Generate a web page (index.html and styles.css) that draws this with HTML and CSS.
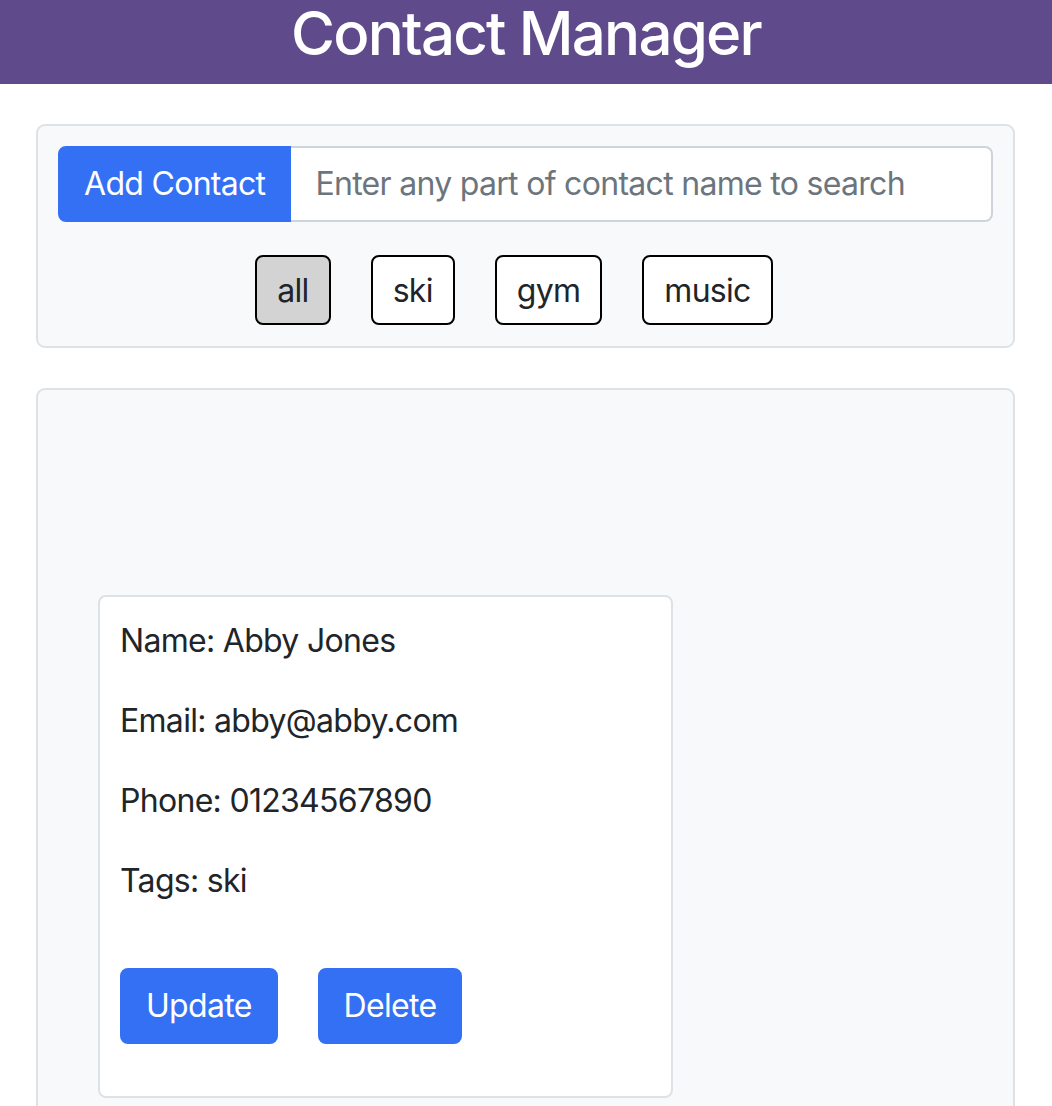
FILE: index.html
```html
<!DOCTYPE html>
<html lang="en">
<head>
<meta charset="utf-8">
<title>Contact Manager</title>
<link rel="stylesheet" href="styles.css">
</head>
<body>
<header class="app-header">
  <h1 class="app-title">Contact Manager</h1>
</header>
<main class="app-main">
  <section class="panel search-panel">
    <div class="input-group">
      <button class="btn btn-primary add-btn" type="button">Add Contact</button>
      <input class="search-input" type="text" placeholder="Enter any part of contact name to search">
    </div>
    <div class="filters">
      <button class="filter filter-active" type="button">all</button>
      <button class="filter" type="button">ski</button>
      <button class="filter" type="button">gym</button>
      <button class="filter" type="button">music</button>
    </div>
  </section>
  <section class="panel list-panel">
    <div class="card">
      <p class="field">Name: Abby Jones</p>
      <p class="field">Email: abby@abby.com</p>
      <p class="field">Phone: 01234567890</p>
      <p class="field">Tags: ski</p>
      <div class="card-actions">
        <button class="btn btn-primary" type="button">Update</button>
        <button class="btn btn-primary" type="button">Delete</button>
      </div>
    </div>
  </section>
</main>
</body>
</html>
```
FILE: styles.css
```css
* { box-sizing: border-box; }
html, body { margin: 0; padding: 0; }
body {
  font-family: Inter, "Noto Sans", "Liberation Sans", sans-serif;
  font-size: 32px;
  line-height: 1.5;
  letter-spacing: -0.7px;
  color: #212529;
  background: #ffffff;
}
.app-header {
  height: 84px;
  background: #5f4b8b;
  text-align: center;
}
.app-title {
  margin: 0;
  font-family: Inter, "Liberation Sans", sans-serif;
  font-weight: 500;
  font-size: 60px;
  line-height: 66px;
  letter-spacing: -1.8px;
  color: #ffffff;
}
.app-main {
  padding: 40px 37px 0 36px;
  display: flex;
  flex-direction: column;
  gap: 40px;
}
.panel {
  background: #f8f9fa;
  border: 2px solid #dee2e6;
  border-radius: 9px;
}
.search-panel {
  padding: 20px 20px 21px 20px;
}
.input-group {
  display: flex;
  height: 76px;
}
.btn {
  font-family: inherit;
  font-size: 32px;
  line-height: 48px;
  letter-spacing: inherit;
  padding: 12px 24px;
  border: 2px solid transparent;
  border-radius: 8px;
  cursor: pointer;
}
.btn-primary {
  background: #3470f4;
  border-color: #3470f4;
  color: #ffffff;
}
.add-btn {
  border-top-right-radius: 0;
  border-bottom-right-radius: 0;
  flex: none;
}
.search-input {
  flex: 1;
  min-width: 0;
  font-family: inherit;
  font-size: 32px;
  line-height: 48px;
  letter-spacing: inherit;
  padding: 12px 24px;
  border: 2px solid #ced4da;
  border-left: 0;
  border-radius: 0 8px 8px 0;
  background: #ffffff;
  color: #212529;
}
.search-input::placeholder { color: #6c757d; }
.filters {
  display: flex;
  justify-content: center;
  gap: 40px;
  margin-top: 33px;
  padding-right: 23px;
}
.filter {
  font-family: inherit;
  font-size: 32px;
  line-height: 44px;
  letter-spacing: inherit;
  padding: 12px 20px;
  height: 70px;
  background: #ffffff;
  color: #212529;
  border: 2px solid #000000;
  border-radius: 8px;
}
.filter-active { background: #d3d3d3; }
.list-panel {
  padding: 205px 340px 200px 60px;
}
.card {
  background: #ffffff;
  border: 2px solid #dee2e6;
  border-radius: 8px;
  padding: 20px;
}
.field {
  margin: 0 0 32px 0;
}
.card-actions {
  display: flex;
  gap: 40px;
  margin: 63px 0 32px 0;
}
```
